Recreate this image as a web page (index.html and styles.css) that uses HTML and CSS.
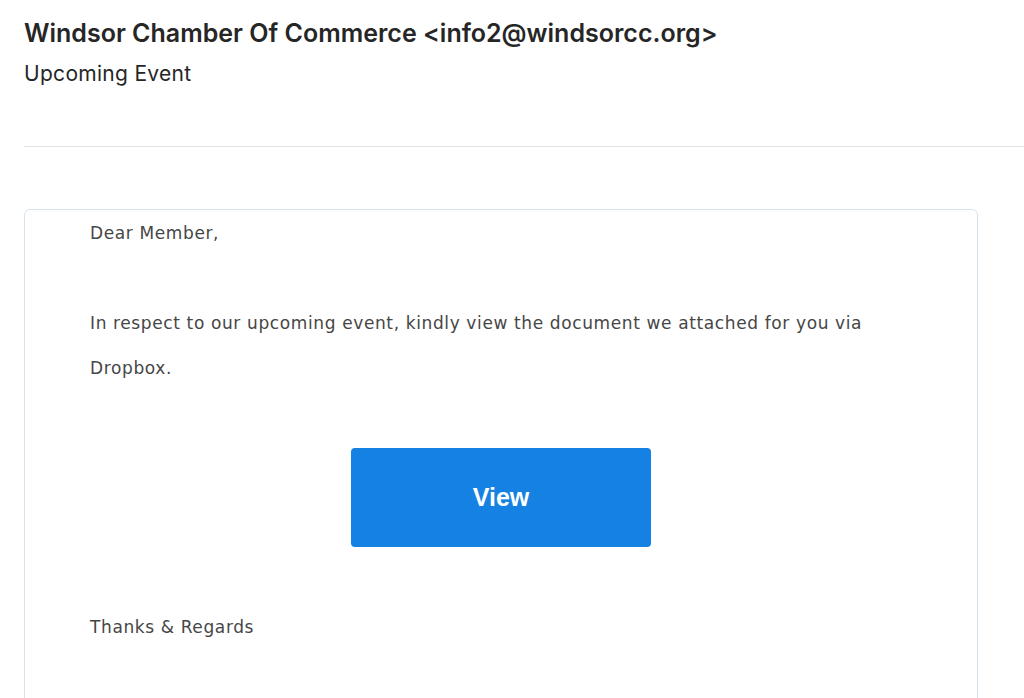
FILE: index.html
```html
<!DOCTYPE html>
<html>
<head>
<meta charset="utf-8">
<link rel="stylesheet" href="styles.css">
</head>
<body>
<header class="mail-header">
  <h1 class="sender">Windsor Chamber Of Commerce &lt;info2@windsorcc.org&gt;</h1>
  <div class="subject">Upcoming Event</div>
</header>
<div class="card">
  <p class="line">Dear Member,</p>
  <p class="line blank">&nbsp;</p>
  <p class="line">In respect to our upcoming event, kindly view the document we attached for you via</p>
  <p class="line">Dropbox.</p>
  <div class="btn-row"><a class="btn">View</a></div>
  <p class="line">Thanks &amp; Regards</p>
</div>
</body>
</html>
```
FILE: styles.css
```css
html, body { margin: 0; padding: 0; background: #fff; }
body { overflow: hidden; height: 698px; }
.mail-header {
  margin-left: 24px;
  padding-top: 18px;
  border-bottom: 1px solid #e3e3e3;
  box-sizing: border-box;
  height: 147px;
}
.sender {
  margin: 0;
  font-family: Inter, "Liberation Sans", sans-serif;
  font-weight: 600;
  font-size: 25px;
  line-height: 30px;
  color: #262626;
  letter-spacing: 0;
}
.subject {
  margin-top: 13px;
  font-family: Inter, "Liberation Sans", sans-serif;
  font-size: 21px;
  line-height: 26px;
  letter-spacing: 0.3px;
  color: #262626;
}
.card {
  margin: 62px 46px 0 24px;
  border: 1px solid #d6e4f1;
  border-radius: 6px;
  padding: 1px 65px 0;
  height: 600px;
  box-sizing: border-box;
}
.line {
  margin: 0;
  font-family: "DejaVu Sans", Verdana, sans-serif;
  font-size: 17px;
  line-height: 45px;
  letter-spacing: 0.62px;
  color: #464646;
}
.btn-row {
  display: flex;
  padding: 57px 0 58px 261px;
}
.btn {
  width: 300px;
  height: 99px;
  background: #1581e2;
  border-radius: 4px;
  color: #fff;
  font-family: "Liberation Sans", Arial, sans-serif;
  font-weight: bold;
  font-size: 25px;
  display: flex;
  align-items: center;
  justify-content: center;
}
```
